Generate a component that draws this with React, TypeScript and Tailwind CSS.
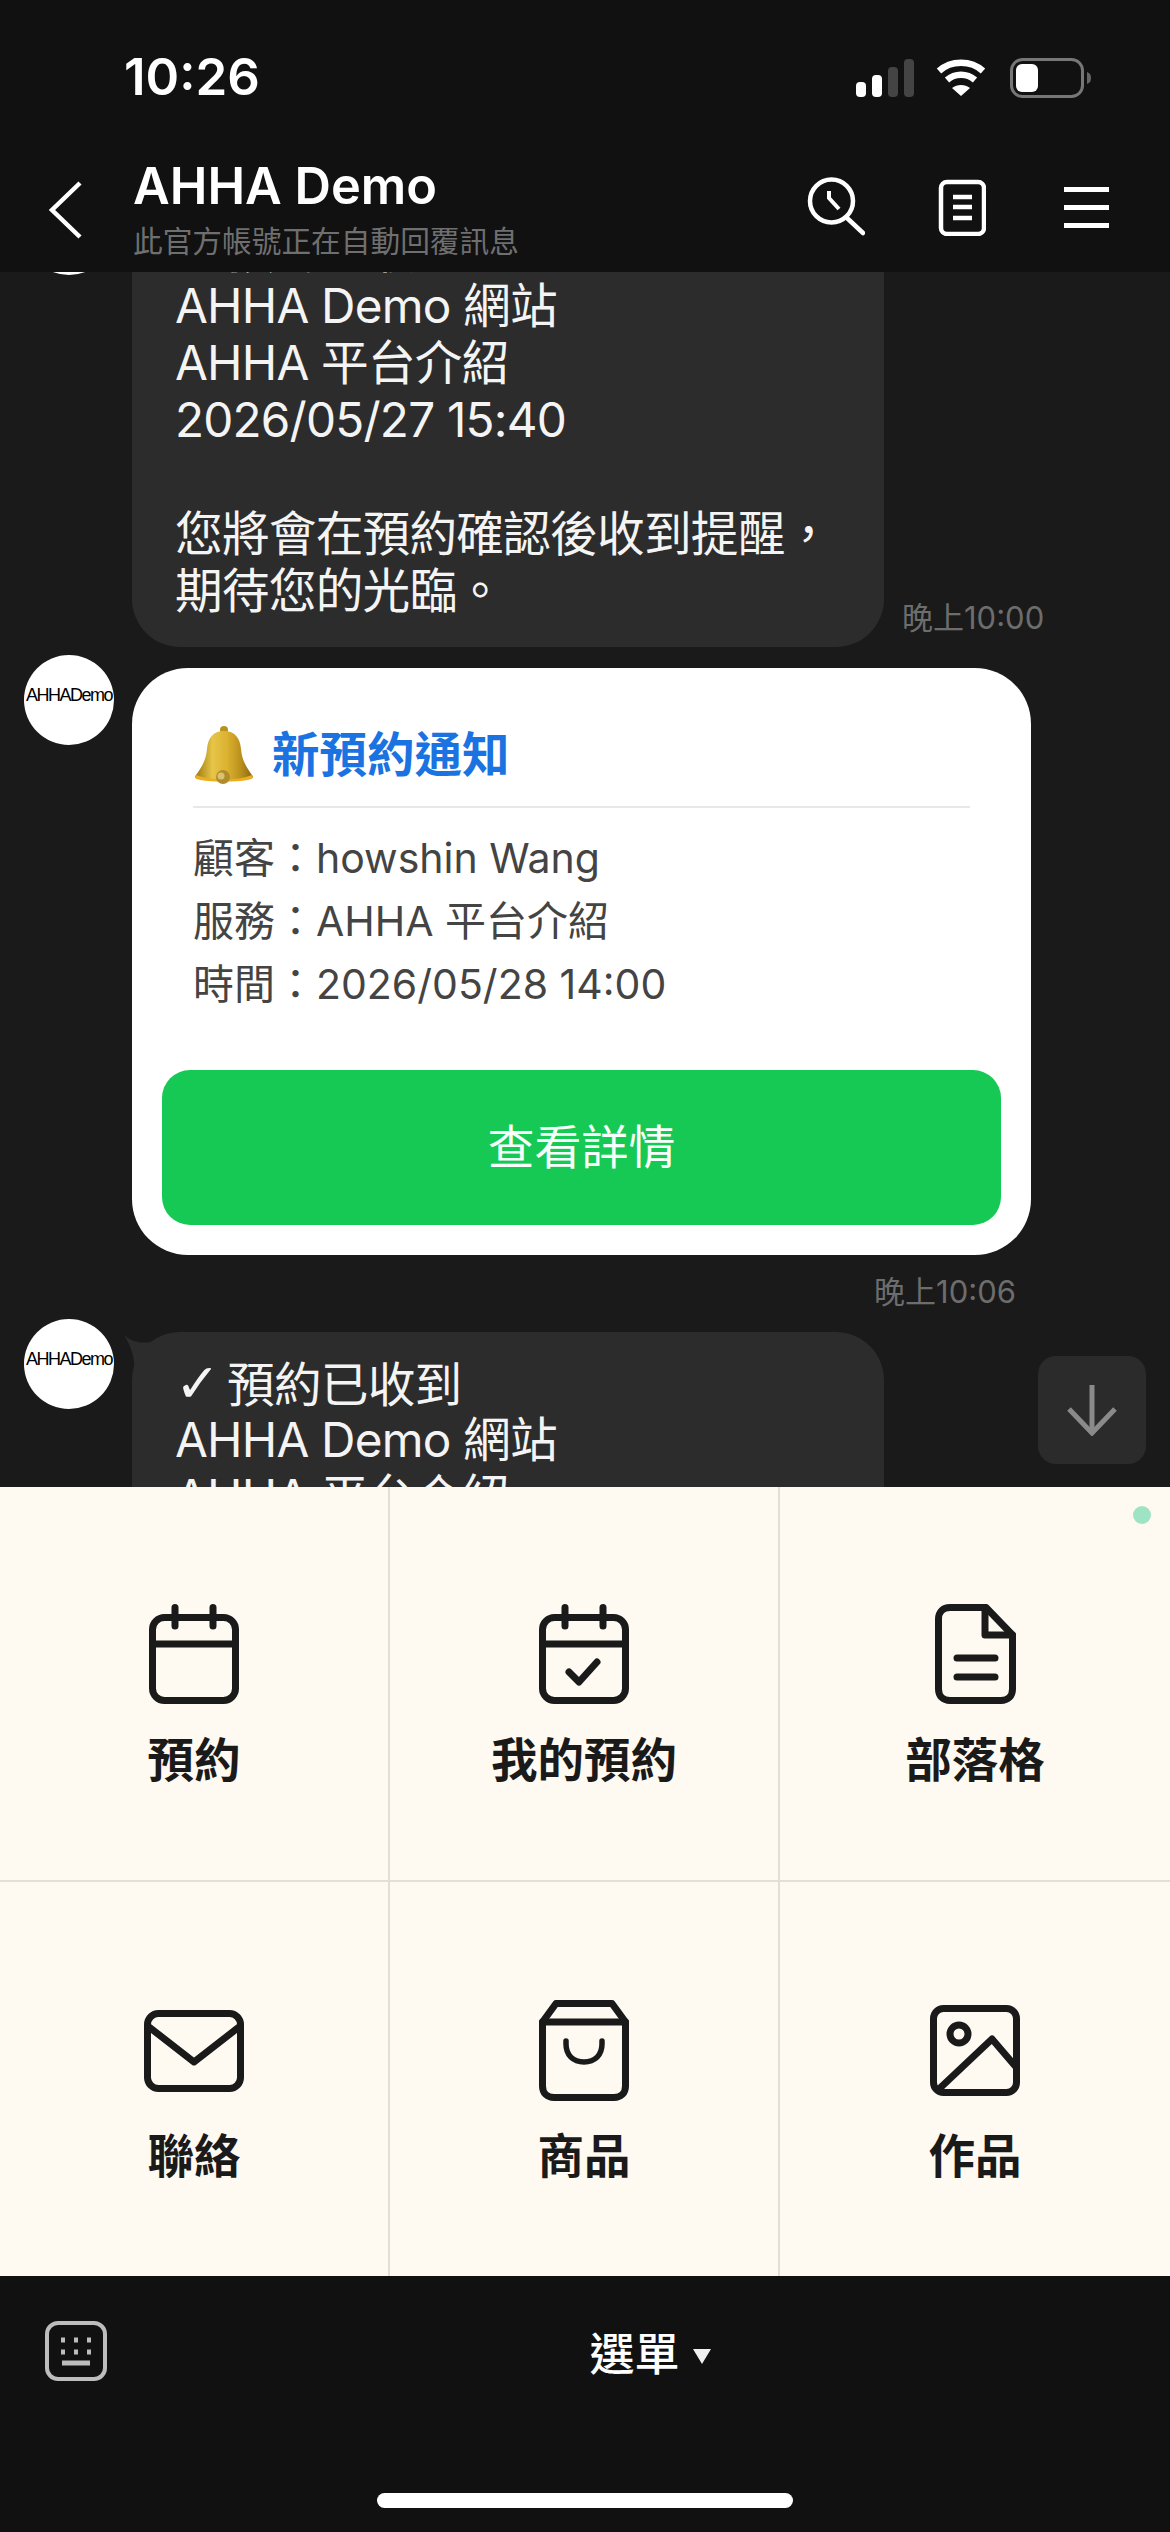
import type { ReactNode } from "react";

const font = "font-[Inter,'Noto_Sans_CJK_TC',sans-serif]";

const messageLines = [
  "預約已收到",
  "AHHA Demo 網站",
  "AHHA 平台介紹",
  "2026/05/27 15:40",
  "",
  "您將會在預約確認後收到提醒，",
  "期待您的光臨。",
];

const Avatar = () => (
  <div className="flex h-[90px] w-[90px] shrink-0 items-center justify-center overflow-hidden rounded-full bg-white pb-[10px]">
    <span className="font-['Liberation_Sans'] text-[18px] tracking-[-1.5px] whitespace-nowrap text-black">AHHADemo</span>
  </div>
);

const TextBubble = () => (
  <div className="relative mt-[13px] w-[752px] shrink-0 rounded-[48px] bg-[#2c2c2c] px-[43px] pt-[23px] pb-[27px] text-[47.7px] leading-[57px] tracking-[-0.8px] text-[#f4f4f4]">
    <svg className="absolute top-0 left-[-10px]" width="42" height="44" viewBox="0 0 42 44">
      <path d="M2 3 C8 9 20 13 32 9 L42 44 L12 44 C14 30 10 15 2 3 Z" fill="#2c2c2c" />
    </svg>
    {messageLines.map((line, i) => (
      <div key={i} className="relative h-[57px] whitespace-nowrap">
        {i === 0 && <span className="inline-block w-[52px] font-['DejaVu_Sans'] text-[54px] leading-[57px]">✓</span>}
        {line}
      </div>
    ))}
  </div>
);

const BellIcon = () => (
  <svg width="62" height="60" viewBox="0 0 62 60">
    <defs>
      <linearGradient id="bellGold" x1="0" y1="0" x2="1" y2="0">
        <stop offset="0" stopColor="#9c7712" />
        <stop offset="0.3" stopColor="#e6c548" />
        <stop offset="0.55" stopColor="#dcb232" />
        <stop offset="0.8" stopColor="#b98f1c" />
        <stop offset="1" stopColor="#8a6710" />
      </linearGradient>
    </defs>
    <circle cx="31" cy="5" r="4" fill="#b8921c" />
    <path
      d="M31 6 C20 6 15 13 14 24 C13 36 8 43 3 50 C1 53 3 54 7 54 C20 56 42 56 55 54 C59 54 61 53 59 50 C54 43 49 36 48 24 C47 13 42 6 31 6 Z"
      fill="url(#bellGold)"
    />
    <path d="M3 50 C18 56 44 56 59 50 C61 53 59 54 55 55 C42 57 20 57 7 55 C3 54 1 53 3 50 Z" fill="#eaae1f" />
    <circle cx="30" cy="52" r="7" fill="#b08c2c" />
    <circle cx="28" cy="51" r="3.5" fill="#dcc270" />
  </svg>
);

const RichIcon = ({ w, h, children }: { w: number; h: number; children: ReactNode }) => (
  <div className="flex h-[101px] items-center">
    <svg
      width={w}
      height={h}
      viewBox={`0 0 ${w} ${h}`}
      fill="none"
      stroke="#1a1a1a"
      strokeWidth="7"
      strokeLinecap="round"
      strokeLinejoin="round"
    >
      {children}
    </svg>
  </div>
);

const CalendarBase = () => (
  <>
    <rect x="3.5" y="13.5" width="83" height="83" rx="12" />
    <path d="M3.5 40 H86.5" strokeLinecap="butt" />
    <path d="M26 3.5 V22 M64 3.5 V22" />
  </>
);

const menuItems: { label: string; icon: ReactNode }[] = [
  {
    label: "預約",
    icon: (
      <RichIcon w={90} h={100}>
        <CalendarBase />
      </RichIcon>
    ),
  },
  {
    label: "我的預約",
    icon: (
      <RichIcon w={90} h={100}>
        <CalendarBase />
        <path d="M30 68 L40 78 L58 58" />
      </RichIcon>
    ),
  },
  {
    label: "部落格",
    icon: (
      <RichIcon w={81} h={100}>
        <path d="M15 3.5 H51 L77.5 31 V85 C77.5 92 73 96.5 66 96.5 H15 C8 96.5 3.5 92 3.5 85 V15 C3.5 8 8 3.5 15 3.5 Z" />
        <path d="M50 3.5 V31 H77.5" />
        <path d="M22 54 H60 M22 73 H60" />
      </RichIcon>
    ),
  },
  {
    label: "聯絡",
    icon: (
      <RichIcon w={100} h={82}>
        <rect x="3.5" y="3.5" width="93" height="75" rx="11" />
        <path d="M5 17 L50 52 L95 17" />
      </RichIcon>
    ),
  },
  {
    label: "商品",
    icon: (
      <RichIcon w={90} h={101}>
        <path d="M3.5 22 H86.5 V86 C86.5 93 82 97.5 75 97.5 H15 C8 97.5 3.5 93 3.5 86 Z" />
        <path d="M3.5 22 L17 3.5 H73 L86.5 22" />
        <path d="M27 41 V44 C27 55 34 62 45 62 C56 62 63 55 63 44 V41" strokeWidth="5.5" />
      </RichIcon>
    ),
  },
  {
    label: "作品",
    icon: (
      <RichIcon w={90} h={91}>
        <rect x="3.5" y="3.5" width="83" height="84" rx="10" />
        <circle cx="29" cy="29" r="9" />
        <path d="M9 84 L62 34 L86 62" />
      </RichIcon>
    ),
  },
];

export default function App() {
  return (
    <div lang="zh-TW" className={`flex h-[2532px] w-[1170px] flex-col overflow-hidden bg-[#111111] ${font}`}>
      {/* status bar + nav */}
      <header className="z-10 h-[272px] shrink-0 bg-[#111111]">
        <div className="flex h-[150px] items-start justify-between pt-[52px] pr-[79px] pl-[124px]">
          <span className="text-[51px] leading-[50px] font-semibold text-white">10:26</span>
          <div className="mt-[6px] flex items-center">
            <svg width="58" height="38" viewBox="0 0 58 38">
              <rect x="0" y="23" width="10" height="15" rx="4" fill="#fff" />
              <rect x="16" y="16" width="10" height="22" rx="4" fill="#fff" />
              <rect x="32" y="8" width="10" height="30" rx="4" fill="#444" />
              <rect x="48" y="0" width="10" height="38" rx="4" fill="#444" />
            </svg>
            <svg className="ml-[22px]" width="50" height="38" viewBox="0 0 50 38" fill="none" stroke="#fff" strokeWidth="6.5">
              <path d="M3 12 C15 1 35 1 47 12" />
              <path d="M11 21 C19 14 31 14 39 21" />
              <path d="M25 37 L16 29 C21 25 29 25 34 29 Z" fill="#fff" stroke="none" />
            </svg>
            <svg className="ml-[24px]" width="81" height="40" viewBox="0 0 81 40">
              <rect x="1.5" y="1.5" width="71" height="37" rx="11" fill="none" stroke="#777" strokeWidth="3" />
              <rect x="6" y="6" width="22" height="28" rx="6" fill="#fff" />
              <path d="M77 14 C80 15 81 17 81 20 C81 23 80 25 77 26 Z" fill="#666" />
            </svg>
          </div>
        </div>
        <div className="flex h-[122px] items-start">
          <svg className="mt-[31px] ml-[48px]" width="34" height="58" viewBox="0 0 34 58" fill="none" stroke="#fff" strokeWidth="4.5">
            <path d="M32 2 L4 29 L32 56" />
          </svg>
          <div className="ml-[51px] w-[674px]">
            <div className="mt-[6px] text-[50.5px] leading-[60px] font-semibold text-white">AHHA Demo</div>
            <div className="mt-[5px] text-[29.7px] leading-[40px] text-[#6f6f6f]">此官方帳號正在自動回覆訊息</div>
          </div>
          <svg className="mt-[26px]" width="58" height="60" viewBox="0 0 58 60" fill="none" stroke="#fff" strokeWidth="4.5" strokeLinecap="round">
            <circle cx="24.5" cy="25" r="21.5" />
            <path d="M22 15 V22 L32 33" strokeWidth="4" strokeLinecap="butt" />
            <path d="M40 42 L56 57" />
          </svg>
          <svg className="mt-[29px] ml-[73px]" width="48" height="57" viewBox="0 0 48 57" fill="none" stroke="#fff" strokeWidth="4.5">
            <rect x="3" y="3" width="43" height="52" rx="6" />
            <path d="M15 18 H34 M15 28 H34 M15 39 H34" />
          </svg>
          <svg className="mt-[37px] ml-[78px]" width="45" height="41" viewBox="0 0 45 41" fill="#fff">
            <rect x="0" y="0" width="45" height="5" />
            <rect x="0" y="18" width="45" height="5" />
            <rect x="0" y="36" width="45" height="5" />
          </svg>
        </div>
      </header>

      {/* chat */}
      <main className="relative h-[1215px] shrink-0 overflow-hidden bg-[#1a1a1a]">
        <div className="-mt-[87px] flex flex-col pl-[24px]">
          <div className="flex items-start gap-[18px]">
            <Avatar />
            <TextBubble />
            <span className="mt-[414px] text-[31px] leading-[38px] whitespace-nowrap text-[#6d6d6d]">晚上10:00</span>
          </div>

          <div className="mt-[8px] flex items-start gap-[18px]">
            <Avatar />
            <div className="mt-[13px] w-[899px]">
              <div className="rounded-[56px] bg-white px-[30px] pt-[57px] pb-[30px]">
                <div className="px-[31px]">
                  <div className="flex items-center gap-[17px] border-b-2 border-[#e8e8e8] pb-[21px]">
                    <BellIcon />
                    <span className="text-[47.5px] leading-[60px] font-bold text-[#1a73e0]">新預約通知</span>
                  </div>
                  <div className="mt-[19px] text-[41px] leading-[63px] text-[#444444]">
                    <div>顧客：howshin Wang</div>
                    <div>服務：AHHA 平台介紹</div>
                    <div>時間：2026/05/28 14:00</div>
                  </div>
                </div>
                <button className="mt-[54px] flex h-[155px] w-full items-center justify-center rounded-[28px] bg-[#16c954] text-[47px] text-[#f6fff9]">
                  查看詳情
                </button>
              </div>
              <div className="mt-[18px] pr-[15px] text-right text-[31px] leading-[38px] text-[#6d6d6d]">晚上10:06</div>
            </div>
          </div>

          <div className="mt-[8px] flex items-start gap-[18px]">
            <Avatar />
            <TextBubble />
          </div>
        </div>

        {/* scroll to bottom */}
        <button className="absolute top-[1084px] right-[24px] flex h-[108px] w-[108px] items-center justify-center rounded-[18px] bg-[#2b2b2b]">
          <svg width="50" height="52" viewBox="0 0 50 52" fill="none" stroke="#8a8a8a" strokeWidth="5">
            <path d="M25 1 V48" />
            <path d="M2 25 L25 49 L48 25" />
          </svg>
        </button>
      </main>

      {/* rich menu */}
      <section className="relative grid h-[789px] shrink-0 grid-cols-3 grid-rows-2 bg-[#fef9f1]">
        <span className="absolute top-[19px] right-[19px] h-[18px] w-[18px] rounded-full bg-[#9fe3c5]" />
        {menuItems.map((item, i) => (
          <div
            key={item.label}
            className={`flex flex-col items-center justify-end border-[#e3dfd5] pb-[92px] ${i % 3 !== 2 ? "border-r-2" : ""} ${i < 3 ? "border-b-2" : ""}`}
          >
            {item.icon}
            <span className="mt-[27px] text-[46.5px] leading-[56px] font-bold text-[#1a1a1a]">{item.label}</span>
          </div>
        ))}
      </section>

      {/* bottom bar */}
      <footer className="flex flex-1 flex-col bg-[#111111]">
        <div className="relative flex items-center justify-center pt-[51px] pl-[130px]">
          <svg className="absolute top-[45px] left-[45px]" width="62" height="60" viewBox="0 0 62 60" fill="none" stroke="#bdbdbd" strokeWidth="4">
            <rect x="2" y="2" width="58" height="56" rx="11" />
            <path d="M16 19 H20 M29 19 H33 M42 19 H46 M16 31 H20 M29 31 H33 M42 31 H46" strokeWidth="5" />
            <path d="M17 42 H45" strokeWidth="5" />
          </svg>
          <span className="text-[45px] leading-[56px] font-medium text-white">選單</span>
          <svg className="mt-[2px] ml-[13px]" width="18" height="15" viewBox="0 0 18 15" fill="#f0f0f0">
            <path d="M0 0 H18 L9 15 Z" />
          </svg>
        </div>
        <div className="mt-[110px] h-[15px] w-[416px] self-center rounded-full bg-white" />
      </footer>
    </div>
  );
}
